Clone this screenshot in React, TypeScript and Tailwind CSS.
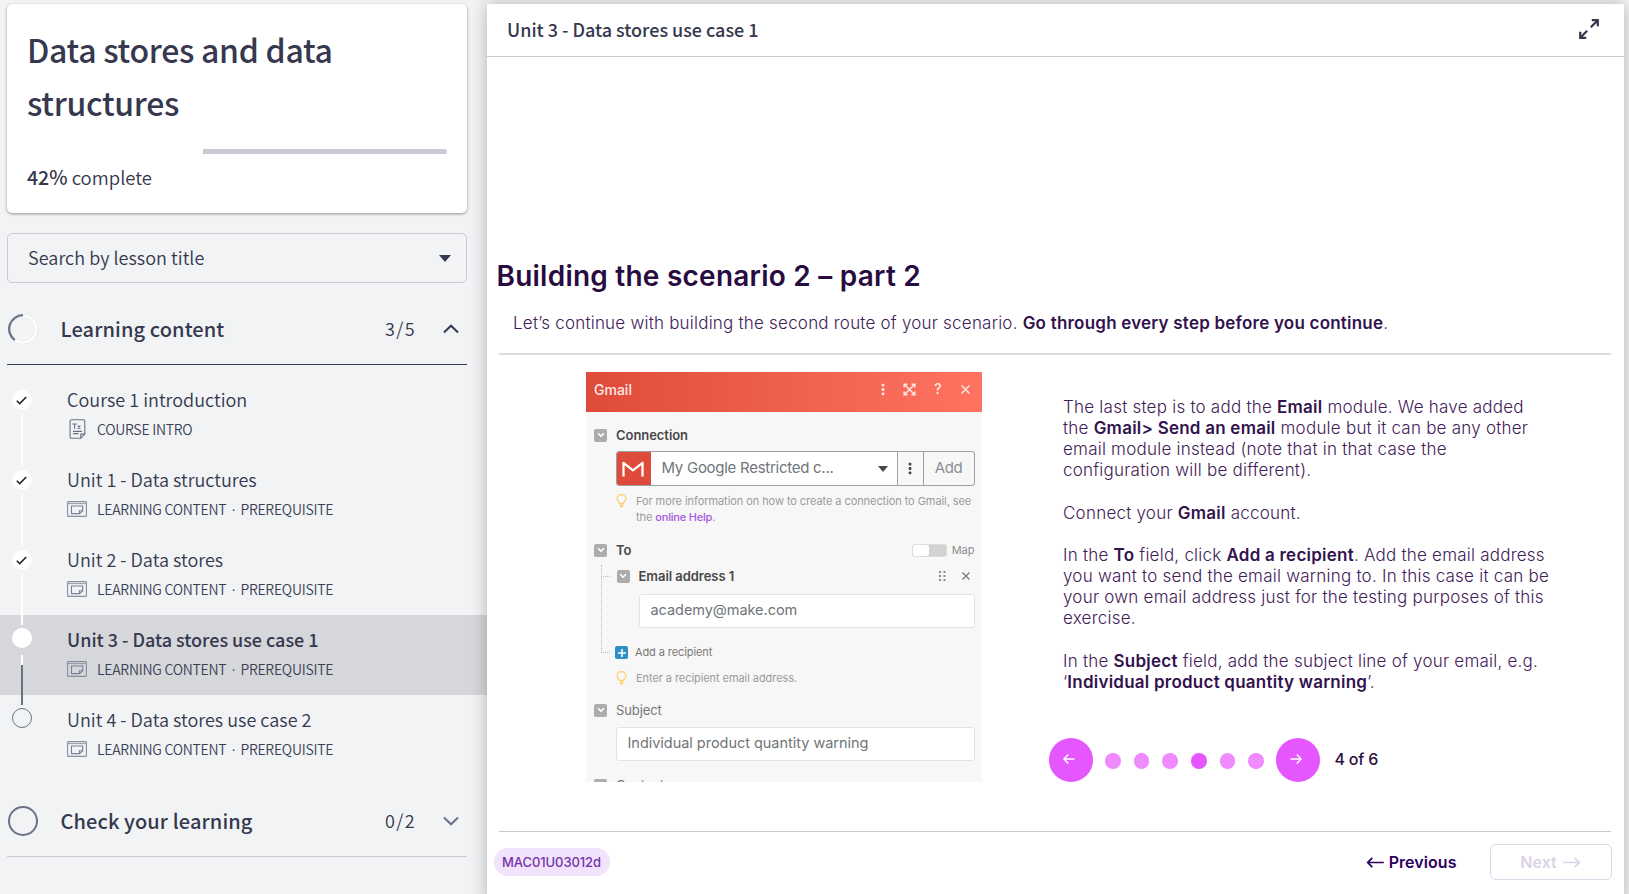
import type { ReactNode } from "react";

/* ---------- icons ---------- */

function TextDocIcon() {
  return (
    <svg className="ml-[1.500px] h-[20px] w-[17px]" viewBox="0 0 17 20" fill="none" stroke="#6e7088" strokeWidth="1.1">
      <path d="M2.500 .8h12c.9 0 1.300.5 1.300 1.300v13l-4 4.100H2.500c-.9 0-1.400-.5-1.400-1.300V2.100C1.100 1.300 1.600.8 2.500.8z" />
      <path d="M11.800 19.200v-4.100h4" />
      <path d="M3.300 5h4.600M5.600 5v4.800M8.700 6.500l2.600 3.300M11.300 6.500L8.700 9.800" />
      <path d="M4 12.400h9M4 14.600h5.500" />
    </svg>
  );
}

function ContentIcon() {
  return (
    <svg className="h-[16px] w-[20px]" viewBox="0 0 20 16" fill="none" stroke="#8b8da0" strokeWidth="1.1">
      <rect x=".6" y=".6" width="18.800" height="14.800" rx=".6" />
      <path d="M1 2.600h18" strokeWidth=".9" />
      <path d="M4.500 5h11.200v4.800l-3.200 2.800h-8z" stroke="#7c7e93" />
      <path d="M12.500 12.600V9.800h3.200" stroke="#7c7e93" />
    </svg>
  );
}

function Bulb() {
  return (
    <svg className="mt-px h-[14px] w-[11px] shrink-0" viewBox="0 0 11 14" fill="none" stroke="#ffd175" strokeWidth="1.400">
      <path d="M3.700 9.600C3.600 7.900 1.200 7.100 1.200 4.700a4.300 4.100 0 0 1 8.600 0c0 2.400-2.400 3.200-2.500 4.900z" />
      <path d="M3.600 11.200h3.800M4.200 12.800h2.600" strokeWidth="1.400" />
    </svg>
  );
}

function Arrow({ className, left = false }: { className: string; left?: boolean }) {
  return (
    <svg className={className} viewBox="0 0 20 12" fill="none" stroke="currentColor" strokeWidth="1.900">
      {left ? <path d="M19 6H1.500M6.500 1l-5 5 5 5" /> : <path d="M1 6h17.500M13.500 1l5 5-5 5" />}
    </svg>
  );
}

function PagerArrow({ left = false }: { left?: boolean }) {
  return (
    <svg className="h-[12px] w-[12px]" viewBox="0 0 12 12" fill="none" stroke="#fff" strokeWidth="1.500">
      {left ? <path d="M11.500 6H1M5.200 1.500L1 6l4.200 4.500" /> : <path d="M.5 6H11M6.800 1.500L11 6l-4.200 4.500" />}
    </svg>
  );
}

function Dots() {
  return (
    <svg className="h-[13px] w-[4px]" viewBox="0 0 4 13" fill="currentColor">
      <rect x=".6" y=".8" width="2.800" height="2.800" rx="1" />
      <rect x=".6" y="5.100" width="2.800" height="2.800" rx="1" />
      <rect x=".6" y="9.400" width="2.800" height="2.800" rx="1" />
    </svg>
  );
}

function Cross({ className }: { className: string }) {
  return (
    <svg className={className} viewBox="0 0 8 8" fill="none" stroke="currentColor" strokeWidth="1.300">
      <path d="M.5 .5l7 7M7.500 .5l-7 7" />
    </svg>
  );
}

function Toggle() {
  return (
    <span className="flex h-[13px] w-[13px] shrink-0 items-center justify-center rounded-[2px] bg-[#acacac]">
      <svg className="h-[6px] w-[8px]" viewBox="0 0 8 6" fill="none" stroke="#fff" strokeWidth="1.500">
        <path d="M1 1.300l3 2.800 3-2.800" />
      </svg>
    </span>
  );
}

/* ---------- sidebar ---------- */

type Status = "done" | "current" | "todo";

interface Lesson {
  title: string;
  status: Status;
  intro?: boolean;
  last?: boolean;
}

const lessons: Lesson[] = [
  { title: "Course 1 introduction", status: "done", intro: true },
  { title: "Unit 1 - Data structures", status: "done" },
  { title: "Unit 2 - Data stores", status: "done" },
  { title: "Unit 3 - Data stores use case 1", status: "current" },
  { title: "Unit 4 - Data stores use case 2", status: "todo", last: true },
];

function StatusDot({ status }: { status: Status }) {
  if (status === "done") {
    return (
      <span className="mt-[15px] flex h-[20px] w-[20px] items-center justify-center rounded-full bg-white">
        <svg className="mr-px h-[9px] w-[11px]" viewBox="0 0 11 9" fill="none" stroke="#25252d" strokeWidth="1.600">
          <path d="M.8 4.700l2.900 2.900L10.200 1" />
        </svg>
      </span>
    );
  }
  if (status === "current") return <span className="mt-[13px] block h-[20px] w-[20px] rounded-full bg-white" />;
  return <span className="mt-[13px] block h-[20px] w-[20px] rounded-full border border-[#6e7088]" />;
}

function LessonRow({ lesson }: { lesson: Lesson }) {
  const current = lesson.status === "current";
  return (
    <li className={current ? "flex h-[80px] bg-[#d6d7db]" : "flex h-[80px]"}>
      <div className="relative w-[67px] shrink-0 pl-[12px]">
        <StatusDot status={lesson.status} />
        {!lesson.last && (
          <span className="absolute left-[21px] top-[40px] z-10 flex h-[50px] w-[2px] flex-col bg-white">
            {current && <span className="mt-[10px] flex-1 bg-[#6e7088]" />}
          </span>
        )}
      </div>
      <div className="pt-[12px]">
        <div
          className={
            current
              ? "text-[18px] font-medium leading-[24px] tracking-[-0.02px] text-[#35384e]"
              : "text-[18px] font-[350] leading-[24px] tracking-[0.02px] text-[#35384e]"
          }
        >
          {lesson.title}
        </div>
        <div className="mt-[8px] flex h-[20px] items-center text-[14px] font-[350] leading-[20px] tracking-[-0.25px] text-[#3c3f55]">
          <span className="flex w-[30px]">{lesson.intro ? <TextDocIcon /> : <ContentIcon />}</span>
          {lesson.intro ? (
            <span>COURSE INTRO</span>
          ) : (
            <span className="flex">
              LEARNING CONTENT<span className="w-[14px] text-center font-['Liberation_Sans']">·</span>PREREQUISITE
            </span>
          )}
        </div>
      </div>
    </li>
  );
}

function SectionHeader({ title, count, open }: { title: string; count: string; open?: boolean }) {
  return (
    <div
      className={
        open
          ? "mx-[7px] mt-[11px] flex h-[71px] w-[460px] items-center border-b border-[#35384e]"
          : "mx-[7px] mt-[11px] flex h-[71px] w-[460px] items-center border-b border-[#c9cad5]"
      }
    >
      <svg className="ml-px h-[30px] w-[30px]" viewBox="0 0 30 30" fill="none" strokeWidth="2">
        {open ? (
          <>
            <circle cx="15" cy="15" r="14.600" stroke="#a9aab8" strokeWidth=".7" strokeDasharray="1.500 1" />
            <circle cx="15" cy="15" r="13.700" stroke="#fff" />
            <path d="M15 1.200A13.800 13.800 0 0 0 6.800 26.100" stroke="#6e7088" strokeWidth="2.300" />
          </>
        ) : (
          <circle cx="15" cy="15" r="14" stroke="#6e7088" />
        )}
      </svg>
      <h2 className="ml-[22.500px] flex-1 text-[20px] font-medium leading-[30px] tracking-[0.1px] text-[#35384e]">{title}</h2>
      <span className="w-[58px] pb-px text-[18px] font-[350] tracking-[1.400px] text-[#35384e]">{count}</span>
      <svg
        className={open ? "mr-[8px] h-[10px] w-[16px] text-[#35384e]" : "mr-[8px] h-[10px] w-[16px] rotate-180 text-[#6e7088]"}
        viewBox="0 0 17 10"
        fill="none"
        stroke="currentColor"
        strokeWidth="2.100"
      >
        <path d="M1 8.800l7.500-7.300L16 8.800" />
      </svg>
    </div>
  );
}

function Sidebar() {
  return (
    <aside className="w-[487px] shrink-0 pt-[4px] font-['Noto_Sans_CJK_SC',sans-serif]">
      <section className="ml-[7px] h-[209px] w-[460px] rounded-[5px] bg-white px-[20px] pt-[19px] shadow-[0_1px_3px_rgba(0,0,0,0.4)]">
        <h1 className="text-[32px] font-medium leading-[53px] tracking-[-0.3px] text-[#35384e]">
          Data stores and data
          <br />
          structures
        </h1>
        <div className="mt-[20px] flex h-[5px] w-[420px] justify-end">
          <div className="h-full w-[244px] rounded-r-full bg-[#c9cad5]" />
        </div>
        <p className="mt-[8px] text-[18.500px] font-[350] leading-[30px] text-[#35384e]">
          <b className="text-[19.500px] font-medium">42%</b> complete
        </p>
      </section>

      <div className="ml-[7px] mt-[20px] flex h-[50px] w-[460px] items-center justify-between rounded-[5px] border border-[#c9cad5] pl-[20px] pr-[15px]">
        <span className="pb-[2px] text-[18px] font-[350] tracking-[0.04px] text-[#35384e]">Search by lesson title</span>
        <svg className="h-[7px] w-[12px]" viewBox="0 0 12 7">
          <path d="M0 0h12L6 7z" fill="#35384e" />
        </svg>
      </div>

      <SectionHeader title="Learning content" count="3/5" open />
      <ul className="mt-[10px]">
        {lessons.map((l) => (
          <LessonRow key={l.title} lesson={l} />
        ))}
      </ul>
      <SectionHeader title="Check your learning" count="0/2" />
    </aside>
  );
}

/* ---------- module form ---------- */

function FieldLabel({ children, strong = true }: { children: ReactNode; strong?: boolean }) {
  return (
    <div className="flex h-[20px] items-center">
      <Toggle />
      <span
        className={
          strong
            ? "ml-[9px] text-[13px] font-semibold leading-[20px] tracking-[-0.05px] text-[#484848]"
            : "ml-[9px] text-[13px] leading-[20px] tracking-[-0.1px] text-[#777]"
        }
      >
        {children}
      </span>
    </div>
  );
}

function Hint({ children }: { children: ReactNode }) {
  return (
    <div className="ml-[22px] flex gap-[9px] text-[11px] leading-[16.500px] tracking-[-0.07px] text-[#9b9b9b]">
      <Bulb />
      <p>{children}</p>
    </div>
  );
}

function GmailForm() {
  return (
    <div className="h-[409.500px] w-[396px] overflow-hidden bg-[#f7f7f7]">
      <div className="flex h-[39.500px] items-center bg-gradient-to-r from-[#df4b3a] to-[#ff7360] pl-[8px] pr-[12.500px] text-[#ffe9e5]">
        <span className="flex-1 pb-[3px] text-[14px] font-medium leading-[20px]">Gmail</span>
        <div className="flex items-center pb-[5px]">
          <Dots />
          <svg className="ml-[18px] h-[13px] w-[13px]" viewBox="0 0 13 13" fill="none" stroke="currentColor" strokeWidth="1.500">
            <path d="M1.200 4.500V1.200h3.300M8.500 1.200h3.300v3.300M11.800 8.500v3.300H8.500M4.500 11.800H1.200V8.500M1.500 1.500l10 10M11.500 1.500l-10 10" />
          </svg>
          <span className="w-[45px] text-center text-[14px] font-medium leading-[14px]">?</span>
          <Cross className="h-[9px] w-[9px]" />
        </div>
      </div>

      <div className="pl-[8px] pr-[7.500px] pt-[13.500px]">
        <FieldLabel>Connection</FieldLabel>
        <div className="ml-[21.500px] mt-[6px] flex h-[35px] overflow-hidden rounded-[3px] border border-[#9aa0a5] text-[15px] text-[#70757a]">
          <div className="-my-px -ml-px flex w-[35px] items-center justify-center bg-[#df4b3a]">
            <svg className="h-[16px] w-[22px]" viewBox="0 0 22 16" fill="none" stroke="#fff" strokeWidth="2.300" strokeLinejoin="round">
              <path d="M1.500 15.500V1.800l9.500 7.500 9.500-7.500v13.700" />
            </svg>
          </div>
          <div className="flex flex-1 items-center justify-between bg-white pl-[11px] pr-[9px]">
            <span className="tracking-[-0.27px]">My Google Restricted c...</span>
            <svg className="h-[6px] w-[10px] text-[#444b52]" viewBox="0 0 10 6">
              <path d="M0 0h10L5 6z" fill="currentColor" />
            </svg>
          </div>
          <div className="flex w-[26px] items-center justify-center border-l border-[#9aa0a5] text-[#444]">
            <Dots />
          </div>
          <div className="flex w-[51px] items-center justify-center border-l border-[#9aa0a5] tracking-[-0.4px] text-[#8a8f93]">Add</div>
        </div>
        <div className="mt-[6.500px]">
          <Hint>
            For more information on how to create a connection to Gmail, see
            <br />
            the <span className="font-medium tracking-[-0.2px] text-[#a259e0]">online Help</span>.
          </Hint>
        </div>

        <div className="mt-[14.500px] flex items-center justify-between">
          <FieldLabel>To</FieldLabel>
          <div className="flex items-center gap-[5px] text-[11px] text-[#8c8c8c]">
            <span className="h-[13px] w-[35px] rounded-[3px] border border-[#dcdcdc] bg-[#d2d2d2]">
              <span className="block h-full w-[16px] rounded-[2px] bg-white" />
            </span>
            Map
          </div>
        </div>

        <div className="relative pt-[6px]">
          <div className="absolute left-[7px] top-[5px] h-[88px] w-[9px] border-b border-l border-dotted border-[#bbb]" />
          <div className="absolute left-[7px] top-[16px] w-[9px] border-t border-dotted border-[#bbb]" />
          <div className="flex items-center pl-[22.500px]">
            <FieldLabel>Email address 1</FieldLabel>
            <svg className="ml-auto h-[10px] w-[7px]" viewBox="0 0 7 10" fill="#8a8a8a">
              <path d="M0 0h2v2H0zM4.500 0h2v2h-2zM0 4h2v2H0zM4.500 4h2v2h-2zM0 8h2v2H0zM4.500 8h2v2h-2z" />
            </svg>
            <Cross className="ml-[16px] mr-[5px] h-[8px] w-[8px] text-[#7a7a7a]" />
          </div>
          <div className="ml-[44.500px] mt-[7.500px] flex h-[34px] items-center rounded-[3px] border border-[#e3e3e3] bg-white pb-[2px] pl-[11px] text-[14.500px] text-[#70757a]">
            <span className="tracking-[-0.05px]">academy@make.com</span>
          </div>
          <div className="mt-[15px] flex h-[20px] items-center pl-[21px]">
            <span className="flex h-[13px] w-[13px] items-center justify-center rounded-[2px] bg-[#2e8fc4]">
              <svg className="h-[8px] w-[8px]" viewBox="0 0 8 8" stroke="#fff" strokeWidth="1.600">
                <path d="M4 0v8M0 4h8" />
              </svg>
            </span>
            <span className="ml-[7px] text-[11px] tracking-[-0.1px] text-[#777]">Add a recipient</span>
          </div>
        </div>
        <div className="mt-[7px]">
          <Hint>Enter a recipient email address.</Hint>
        </div>

        <div className="mt-[14px]">
          <FieldLabel strong={false}>Subject</FieldLabel>
        </div>
        <div className="ml-[21.500px] mt-[7px] flex h-[34px] items-center rounded-[3px] border border-[#e3e3e3] bg-white pb-[2px] pl-[11px] text-[14.500px] text-[#70757a]">
          <span className="tracking-[-0.03px]">Individual product quantity warning</span>
        </div>
        <div className="mt-[14px]">
          <FieldLabel strong={false}>Content</FieldLabel>
        </div>
      </div>
    </div>
  );
}

/* ---------- lesson panel ---------- */

function B({ children }: { children: ReactNode }) {
  return <b className="font-semibold text-[#32124d]">{children}</b>;
}

function Instructions() {
  return (
    <div className="whitespace-nowrap pl-[14.500px] text-[17px] font-light leading-[21.140px] tracking-[0.230px] text-[#3f2158]">
      <p>
        The last step is to add the <B>Email</B> module. We have added
        <br />
        the <B>Gmail&gt; Send an email</B> module but it can be any other
        <br />
        email module instead (note that in that case the
        <br />
        configuration will be different).
      </p>
      <p className="mt-[21.140px]">
        Connect your <B>Gmail</B> account.
      </p>
      <p className="mt-[21.140px]">
        In the <B>To</B> field, click <B>Add a recipient</B>. Add the email address
        <br />
        you want to send the email warning to. In this case it can be
        <br />
        your own email address just for the testing purposes of this
        <br />
        exercise.
      </p>
      <p className="mt-[21.140px]">
        In the <B>Subject</B> field, add the subject line of your email, e.g.
        <br />‘<B>Individual product quantity warning</B>’.
      </p>
    </div>
  );
}

function Pager() {
  return (
    <div className="mt-[45px] flex h-[44px] items-center">
      <button className="flex h-[44px] w-[44px] items-center justify-center rounded-full bg-[#e656ff] pb-px pr-[4px]">
        <PagerArrow left />
      </button>
      <div className="ml-[12.500px] mr-[12.500px] mt-[2px] flex gap-[13.200px]">
        {[1, 2, 3, 4, 5, 6].map((n) => (
          <span
            key={n}
            className={n === 4 ? "h-[15.500px] w-[15.500px] rounded-full bg-[#e656ff]" : "h-[15.500px] w-[15.500px] rounded-full bg-[#ef8aff]"}
          />
        ))}
      </div>
      <button className="flex h-[44px] w-[44px] items-center justify-center rounded-full bg-[#e656ff] pb-px pr-[4px]">
        <PagerArrow />
      </button>
      <span className="ml-[14px] pb-[2px] text-[16px] font-medium tracking-[-0.200px] text-[#2d1142]">4 of 6</span>
    </div>
  );
}

function LessonPanel() {
  return (
    <main className="z-20 mt-[4px] h-[900px] w-[1137px] shrink-0 bg-white shadow-[0_0_16px_rgba(0,0,0,0.27)]">
      <header className="flex h-[53px] items-center justify-between border-b border-[#c9cad5] pl-[20px] pr-[25px] font-['Noto_Sans_CJK_SC',sans-serif]">
        <span className="pb-[2px] text-[18px] font-medium tracking-[-0.02px] text-[#35384e]">Unit 3 - Data stores use case 1</span>
        <svg className="mb-[2px] h-[20px] w-[20px]" viewBox="0 0 20 20" fill="none" stroke="#35384e" strokeWidth="2.200">
          <path d="M11.800 8.200L18.500 1.500M12.800 1.200h6v6M8.200 11.800L1.500 18.500M1.200 12.800v6h6" />
        </svg>
      </header>

      <div className="pt-[202px] font-['Inter',sans-serif]">
        <h2 className="pl-[9.500px] text-[28px] font-semibold leading-[34px] tracking-[0.230px] text-[#280b40]">
          Building the scenario 2 – part 2
        </h2>
        <p className="mt-[19px] whitespace-nowrap pl-[26px] text-[17px] font-light leading-[22px] tracking-[0.215px] text-[#3f2158]">
          Let’s continue with building the second route of your scenario. <B>Go through every step before you continue</B>.
        </p>
        <hr className="ml-[11.500px] mt-[19px] w-[1112px] border-t-2 border-[#e0dadd]" />

        <div className="mt-[17px] flex pl-[99px]">
          <GmailForm />
          <div className="ml-[66.500px] pt-[25px]">
            <Instructions />
            <Pager />
          </div>
        </div>

        <footer className="ml-[11.500px] mt-[49px] flex h-[50px] w-[1112px] items-start border-t-[1.500px] border-[#cfc8cc] pt-[12.500px]">
          <span className="-ml-[4.500px] mt-[4px] flex h-[28px] w-[116px] items-center justify-center rounded-full bg-[#f0e3fb] pr-px text-[13px] font-medium tracking-[-0.080px] text-[#7632a8]">
            MAC01U03012d
          </span>
          <div className="ml-auto flex h-[36px] items-center text-[16px] font-semibold">
            <span className="flex items-center tracking-[0.05px] text-[#2d0060]">
              <Arrow left className="mr-[4px] h-[11px] w-[19px]" />
              Previous
            </span>
            <button className="-mr-px ml-[33px] flex h-[36px] w-[122px] items-center justify-center rounded-[6px] border-[1.500px] border-[#ded5e8] text-[#dcd3e6]">
              Next
              <Arrow className="ml-[5px] h-[11px] w-[19px]" />
            </button>
          </div>
        </footer>
      </div>
    </main>
  );
}

export default function App() {
  return (
    <div className="flex h-[894px] w-[1629px] overflow-hidden bg-[#f1f3f5]">
      <Sidebar />
      <LessonPanel />
    </div>
  );
}
